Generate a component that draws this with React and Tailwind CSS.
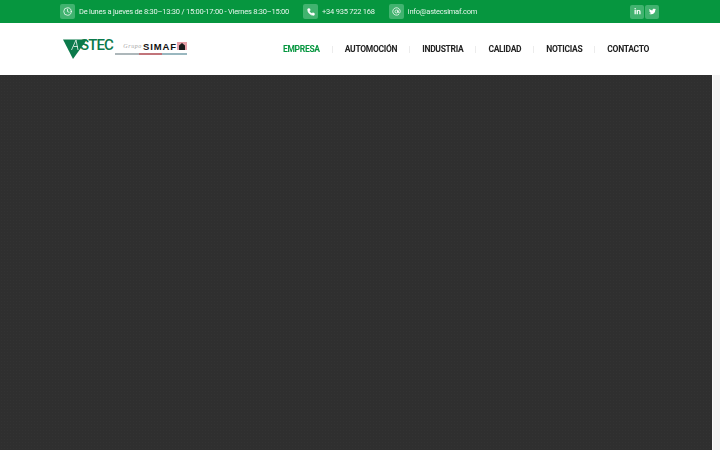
import React from "react";
import { Clock, Phone, AtSign } from "lucide-react";
import { FaLinkedinIn, FaTwitter } from "react-icons/fa";

const menu = [
  { label: "EMPRESA", active: true },
  { label: "AUTOMOCIÓN" },
  { label: "INDUSTRIA" },
  { label: "CALIDAD" },
  { label: "NOTICIAS" },
  { label: "CONTACTO" },
];

const IconBox = ({ children, className = "w-[15px] h-[15px]" }) => (
  <span className={`${className} flex items-center justify-center rounded-[2px] bg-[#41b36f] text-white shrink-0`}>
    {children}
  </span>
);

const Logo = () => (
  <div className="flex items-center w-[126px] h-[22px]">
    <div className="relative w-[52px] h-[22px] shrink-0">
      <svg width="26" height="21" viewBox="0 0 26 21" className="absolute left-0 top-0">
        <path d="M0 1.5H24L10 21Z" fill="#0b7a4b" />
        <path d="M13 2L8.5 12M13 2L15 12M10.5 8.5H15" stroke="#dcebe3" strokeWidth="0.9" fill="none" />
      </svg>
      <span className="absolute left-[17px] top-[-0.5px] text-[15px] leading-[14px] font-medium text-[#0b7a4b] font-['Roboto',sans-serif] tracking-[-0.9px]">
        STEC
      </span>
    </div>
    <div className="flex flex-col w-[72px] mt-[-2px]">
      <div className="flex items-center justify-end h-[9px]">
        <span className="text-[6px] italic text-[#a5a5a5] mr-[1px] font-['Liberation_Serif',serif] tracking-[0.6px]">Grupo</span>
        <span className="text-[9.5px] leading-[9px] font-bold text-[#111] font-['Liberation_Sans',sans-serif] tracking-[0.9px]">
          SIMAF
        </span>
        <svg width="10" height="8" viewBox="0 0 10 8">
          <rect width="10" height="8" fill="#e8a0a8" />
          <path d="M2 3.5L5 1L8 3.5V8H2Z" fill="#1a1a1a" />
        </svg>
      </div>
      <div className="flex h-[2px] mt-[2px] opacity-70">
        <div className="w-[24px] bg-[#8b9a9e]" />
        <div className="w-[23px] bg-[#a83a42]" />
        <div className="w-[25px] bg-[#6f9aa5]" />
      </div>
    </div>
  </div>
);

const App = () => {
  return (
    <div className="w-[720px] h-[450px] overflow-hidden bg-white font-['Roboto',sans-serif] flex flex-col">
      <div className="h-[23px] bg-[#06963f] shrink-0 flex items-center justify-between pl-[60px] pr-[61px] text-[7.5px] tracking-[-0.225px] text-[#e6f5ec]">
        <div className="flex items-center will-change-transform">
          <IconBox>
            <Clock size={9} strokeWidth={2} />
          </IconBox>
          <span className="ml-[4px]">De lunes a jueves de 8:30–13:30 / 15:00-17:00 - Viernes 8:30–15:00</span>
          <span className="ml-[14px]">
            <IconBox>
              <Phone size={8} strokeWidth={2} fill="currentColor" />
            </IconBox>
          </span>
          <span className="ml-[4px]">+34 935 722 168</span>
          <span className="ml-[14px]">
            <IconBox>
              <AtSign size={9} strokeWidth={2} />
            </IconBox>
          </span>
          <span className="ml-[4px]">info@astecsimaf.com</span>
        </div>
        <div className="flex items-center gap-[1px]">
          <IconBox className="w-[14px] h-[14px]">
            <FaLinkedinIn size={7} />
          </IconBox>
          <IconBox className="w-[14px] h-[14px]">
            <FaTwitter size={7} />
          </IconBox>
        </div>
      </div>

      <div className="h-[52px] shrink-0 flex items-center justify-between pl-[63px] pr-[71px] bg-white">
        <Logo />
        <nav className="flex items-center mt-[1px] will-change-transform">
          {menu.map((item, i) => (
            <React.Fragment key={item.label}>
              {i > 0 && <span className="w-[1px] h-[7px] bg-[#ececec] mx-[12px]" />}
              <span className={`text-[8.5px] tracking-[-0.3px] font-bold ${item.active ? "text-[#06963f]" : "text-[#222]"}`}>
                {item.label}
              </span>
            </React.Fragment>
          ))}
        </nav>
      </div>

      <div className="flex-1 flex">
        <div className="w-[712px] bg-[#2f2f2f] bg-[radial-gradient(#333333_0.6px,transparent_0.7px)] bg-[size:3px_3px]" />
        <div className="flex-1 bg-[#f4f4f4] ml-[1px]" />
      </div>
    </div>
  );
};

export default App;
